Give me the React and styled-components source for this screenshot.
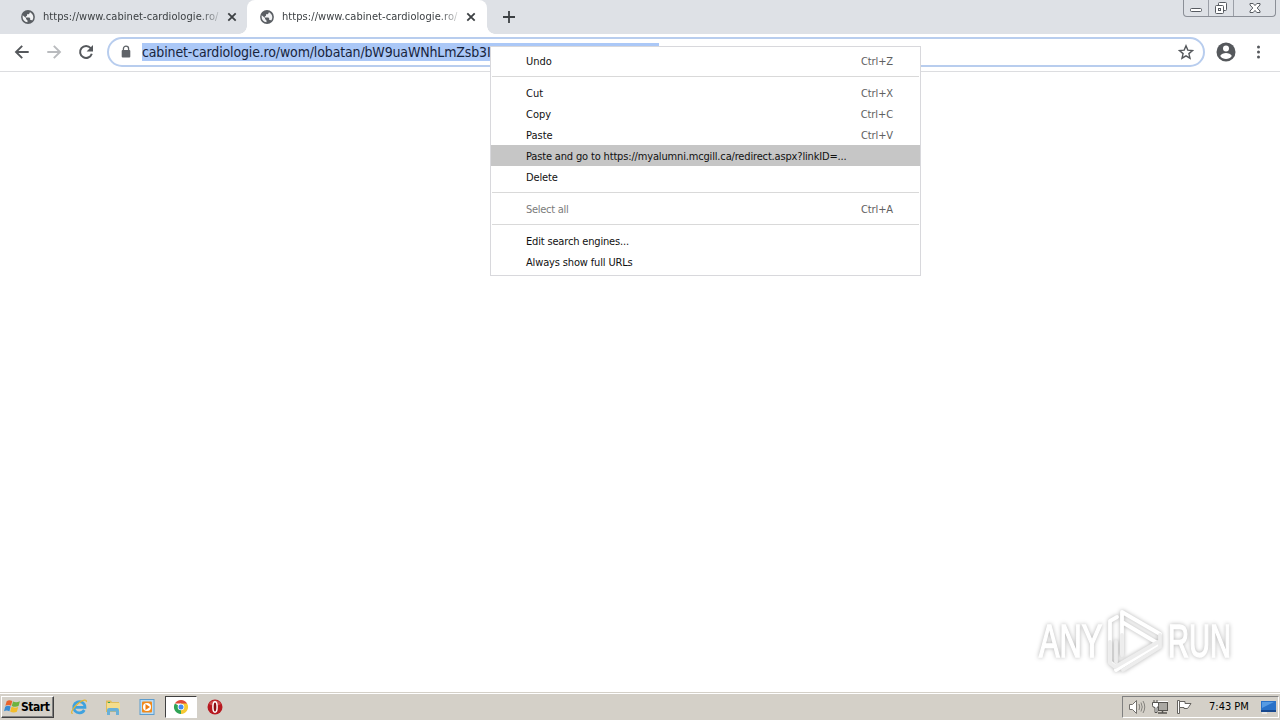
import React from "react";
import styled, { createGlobalStyle } from "styled-components";

const GlobalStyle = createGlobalStyle`
  * {
    box-sizing: border-box;
  }
  body {
    margin: 0;
    overflow: hidden;
    background: #fff;
    font-family: "DejaVu Sans Condensed", "DejaVu Sans", sans-serif;
    font-stretch: condensed;
    font-size: 11px;
    color: #000;
  }
  svg {
    display: block;
    flex: none;
  }
`;

const Screen = styled.div`
  display: flex;
  flex-direction: column;
  width: 1280px;
  height: 720px;
  position: relative;
`;

const TabStrip = styled.div`
  display: flex;
  height: 34px;
  background: #dee1e6;
`;

const Tab = styled.div`
  display: flex;
  align-items: center;
  width: ${(props) => (props.$active ? "240px" : "247px")};
  padding-left: ${(props) => (props.$active ? "12px" : "20px")};
  background: ${(props) => (props.$active ? "#fff" : "transparent")};
  border-radius: 8px 8px 0 0;
  position: relative;
  &:before,
  &:after {
    content: "";
    display: ${(props) => (props.$active ? "block" : "none")};
    position: absolute;
    bottom: 0;
    width: 8px;
    height: 8px;
  }
  &:before {
    left: -8px;
    background: radial-gradient(circle at 0 0, transparent 7.5px, #fff 8px);
  }
  &:after {
    right: -8px;
    background: radial-gradient(circle at 100% 0, transparent 7.5px, #fff 8px);
  }
`;

const TabTitle = styled.span`
  width: 177px;
  margin: 0 7px 0 7px;
  white-space: nowrap;
  line-height: 16px;
  letter-spacing: 0.07px;
  color: #3c4043;
  mask-image: linear-gradient(to right, #000 157px, transparent 181px);
`;

const NewTab = styled.div`
  display: flex;
  align-items: center;
  padding-left: 16px;
`;

const WindowButtons = styled.div`
  display: flex;
  height: 17px;
  margin: 0 4px 0 auto;
  border: 1px solid #8b8f97;
  border-top: 0;
  border-radius: 0 0 4px 4px;
`;

const WindowButton = styled.div`
  display: flex;
  align-items: center;
  justify-content: center;
  width: ${(props) => props.$width}px;
  & + & {
    border-left: 1px solid #9b9fa7;
  }
`;

const Toolbar = styled.div`
  display: flex;
  align-items: center;
  height: 38px;
  padding: 0 12px 1px 12px;
  border-bottom: 1px solid #dcdde0;
`;

const NavButton = styled.div`
  width: 20px;
  margin-right: 12px;
`;

const AddressBar = styled.div`
  display: flex;
  align-items: center;
  width: 1098px;
  height: 30px;
  margin-left: -1px;
  padding: 0 9px 0 10px;
  border: 2px solid #b8cdee;
  border-radius: 15px;
`;

const Url = styled.span`
  width: 517px;
  height: 18px;
  margin-left: 9px;
  margin-right: auto;
  overflow: hidden;
  white-space: nowrap;
  font-size: 14px;
  line-height: 18px;
  letter-spacing: -0.15px;
  background: #abc8f7;
  color: #17243c;
`;

const Profile = styled.div`
  margin: 0 12px 0 11px;
`;

const Page = styled.div`
  flex: 1;
  display: flex;
  align-items: flex-end;
  justify-content: flex-end;
  padding: 0 44px 17px 0;
`;

const Menu = styled.div`
  position: absolute;
  left: 490px;
  top: 46px;
  width: 431px;
  padding: 3px 0;
  border: 1px solid #d8d8dc;
  background: #fff;
`;

const MenuItem = styled.div`
  display: flex;
  justify-content: space-between;
  height: 21px;
  padding: 0 27px 0 35px;
  line-height: 23px;
  white-space: nowrap;
  letter-spacing: ${(props) => props.$spacing || 0}px;
  background: ${(props) => (props.$selected ? "#c6c6c6" : "transparent")};
  color: ${(props) => (props.$disabled ? "#7b7b7b" : "#111")};
`;

const Shortcut = styled.span`
  color: #606060;
  letter-spacing: -0.1px;
`;

const Separator = styled.div`
  height: 1px;
  margin: 5px 1px;
  background: #d9d9d9;
`;

const Taskbar = styled.div`
  display: flex;
  align-items: center;
  height: 28px;
  padding: 2px 1px 2px 1px;
  background: #d4d0c8;
  border-top: 1px solid #d4d0c8;
  box-shadow: inset 0 1px #fff;
`;

const StartButton = styled.div`
  display: flex;
  align-items: center;
  width: 53px;
  height: 22px;
  padding-left: 2px;
  border: 1px solid;
  border-color: #fff #404040 #404040 #fff;
  box-shadow: inset -1px -1px #808080;
  font-size: 12px;
  font-weight: 700;
  letter-spacing: -0.45px;
`;

const QuickButton = styled.div`
  display: flex;
  align-items: center;
  justify-content: center;
  width: 32px;
  height: 22px;
  margin-right: 2px;
  border: 1px solid;
  border-color: ${(props) =>
    props.$active ? "#404040 #fff #fff #404040" : "transparent"};
  background: ${(props) => (props.$active ? "#fff" : "transparent")};
`;

const QuickLaunch = styled.div`
  display: flex;
  margin-left: 9px;
`;

const Tray = styled.div`
  display: flex;
  align-items: center;
  width: 157px;
  height: 22px;
  margin-left: auto;
  padding-left: 5px;
  border: 1px solid;
  border-color: #808080 #fff #fff #808080;
`;

const TrayIcons = styled.div`
  display: flex;
  gap: 6px;
`;

const Clock = styled.span`
  width: 51px;
  margin-left: 15px;
  white-space: nowrap;
`;

const Globe = () => (
  <svg width="16" height="16" viewBox="0 0 16 16">
    <circle cx="8" cy="8" r="6.9" fill="#5a5e63" />
    <path
      d="M2.7 6.2 6 9.1v1l1.5 1.4v1.8C4.6 13 2.6 10.8 2.6 8zM9.8 3v1.1L8.6 5.3H7v1.5L5.8 7.6v1h3.6l.8.8v1.5h1.1l.9.7c2-2.5 1.5-6.4-2.4-8.6z"
      fill="#f1f2f4"
    />
  </svg>
);

const CloseTab = () => (
  <svg width="10" height="10" viewBox="0 0 10 10">
    <path d="m1.3 1.3 7.4 7.4m0-7.4L1.3 8.7" stroke="#3c4043" strokeWidth="1.8" />
  </svg>
);

const Arrow = ({ flip, color }) => (
  <svg width="20" height="20" viewBox="0 0 20 20">
    <path
      d="M16.7 10H4.2M10.2 3.8 4 10l6.2 6.2"
      transform={flip ? "rotate(180 10 10)" : undefined}
      fill="none"
      stroke={color}
      strokeWidth="1.9"
    />
  </svg>
);

const Reload = () => (
  <svg width="20" height="20" viewBox="0 0 20 20">
    <path
      d="M14.7 6.1A6 6 0 1 0 15.8 11.8"
      fill="none"
      stroke="#55585c"
      strokeWidth="2"
    />
    <path d="M17 3v6.4h-6.4z" fill="#55585c" />
  </svg>
);

const Lock = () => (
  <svg width="14" height="16" viewBox="0 0 14 16">
    <path d="M4.4 7V4.8a2.6 2.6 0 0 1 5.2 0V7" fill="none" stroke="#5f6368" strokeWidth="1.3" />
    <rect x="2.7" y="6" width="8.6" height="7.4" rx="1" fill="#5f6368" />
  </svg>
);

const Star = () => (
  <svg width="16" height="16" viewBox="0 0 16 16">
    <path
      d="m8 1.8 1.8 4.3 4.7.4-3.6 3.1 1.1 4.6L8 11.8l-4 2.4 1.1-4.6-3.6-3.1 4.7-.4z"
      fill="none"
      stroke="#55585c"
      strokeWidth="1.4"
    />
  </svg>
);

const Avatar = () => (
  <svg width="20" height="20" viewBox="0 0 20 20">
    <circle cx="10" cy="10" r="9.5" fill="#55585c" />
    <circle cx="10" cy="6.6" r="3" fill="#fff" />
    <path d="M4.2 13.9c.6-2 3.8-3 5.8-3s5.2 1 5.8 3a7 7 0 0 1-11.6 0z" fill="#fff" />
  </svg>
);

const WatermarkSvg = styled.svg`
  font: 400 47px "Liberation Sans", sans-serif;
  filter: drop-shadow(0 0 2px rgba(0, 0, 0, 0.3));
`;

const Watermark = () => (
  <WatermarkSvg width="200" height="70" viewBox="0 0 200 70">
    <defs>
      <linearGradient id="letters" x1="0" y1="17" x2="0" y2="53" gradientUnits="userSpaceOnUse">
        <stop offset="0.5" stopColor="#fff" />
        <stop offset="0.55" stopColor="#ececec" />
      </linearGradient>
    </defs>
    <g fill="url(#letters)" stroke="url(#letters)" strokeWidth="1.5">
      <text transform="translate(3 52) scale(0.655 1)">ANY</text>
      <text transform="translate(132 52) scale(0.62 1)">RUN</text>
    </g>
    <g fill="none" strokeWidth="3.8" strokeLinejoin="round" strokeLinecap="round">
      <path d="M86 48V7l38 22M86 17l37 22L80 65" stroke="#fff" />
      <path d="M81 12l-7 4v41l5 4" stroke="#fff" />
      <path d="M74 37v21l5 4 43-25M80 37v20M87 65l37-23V30M86 30v20" stroke="#ededed" />
    </g>
  </WatermarkSvg>
);

const Flag = () => (
  <svg width="17" height="17" viewBox="0 0 16 16">
    <path d="M2.500 3c2-1.500 3.500-1 5.300-.2L6.600 7.200c-2-1-3.600-.8-5.300.2z" fill="#e8642c" />
    <path d="M8.500 3.200c2 1 4 1 6.500-.2l-1.300 4.600c-2 1-4.300.9-6.400-.1z" fill="#6db33f" />
    <path d="M1.100 8.200c2-1.200 3.600-1 5.200-.2l-1.200 4.400c-2-1-3.600-.9-5.100.1z" fill="#398bd2" />
    <path d="M7.100 8.300c2 1 4.200 1 6.300.1l-1.300 4.500c-2 1-4.300.9-6.300-.1z" fill="#f3bd2b" />
  </svg>
);

const InternetExplorer = () => (
  <svg width="18" height="18" viewBox="0 0 18 18">
    <path
      d="M14.300 12A5.700 5.700 0 1 1 15 9.300H4.500"
      fill="none"
      stroke="#3fa2df"
      strokeWidth="2.700"
    />
    <path
      d="M2.700 15.500C-.5 15.500 4 8.500 9 4.700c4-3 8.200-3.800 7.200-.7"
      fill="none"
      stroke="#e4b632"
      strokeWidth="1.200"
    />
  </svg>
);

const Explorer = () => (
  <svg width="18" height="18" viewBox="0 0 18 18">
    <path d="M2 2.500h5l1 1.500h7v10H2z" fill="#dfbd5c" />
    <path d="M3 5h13v8H3z" fill="#f5dd8c" />
    <path d="M4 4h2v1H4z" fill="#38a853" />
    <path d="M3 17v-5q0-2 2-2h8q2 0 2 2v5h-3v-3.500H6V17z" fill="#69b0d8" />
  </svg>
);

const MediaPlayer = () => (
  <svg width="18" height="18" viewBox="0 0 18 18">
    <rect x="2" y="1.500" width="14" height="15" fill="#b9dcf5" stroke="#5d9dce" />
    <rect x="4" y="3.500" width="10" height="11" rx="1" fill="#f18a1b" />
    <circle cx="9" cy="9" r="4" fill="#fff" />
    <path d="m7.500 6 4.500 3-4.500 3z" fill="#ee7d10" />
  </svg>
);

const Chrome = () => (
  <svg width="16" height="16" viewBox="0 0 16 16">
    <path d="M8 8V1l6.100 3.500A7 7 0 0 1 8 15z" fill="#f6c932" />
    <path d="M8 8v7A7 7 0 0 1 1.900 4.500z" fill="#2fa355" />
    <path d="M1.900 4.500A7 7 0 0 1 14.100 4.500H8z" fill="#df4937" />
    <circle cx="8" cy="8" r="3.300" fill="#fff" />
    <circle cx="8" cy="8" r="2.500" fill="#438af0" />
  </svg>
);

const Opera = () => (
  <svg width="16" height="16" viewBox="0 0 16 16">
    <circle cx="8" cy="8" r="7.500" fill="#b71920" />
    <path d="M2 5a7 7 0 0 1 12 0c-3 2-9 2-12 0z" fill="#d04a4d" />
    <ellipse cx="8" cy="8" rx="2.100" ry="5.200" fill="#8c0c12" stroke="#fff" strokeWidth="1.500" />
  </svg>
);

const Speaker = () => (
  <svg width="18" height="16" viewBox="0 0 18 16">
    <path d="M1.500 5.500h3l4-4v13l-4-4h-3z" fill="#fff" stroke="#73716d" />
    <path
      d="M11 5q1.500 3 0 6M13 3.500q2.500 4.500 0 9M15 2q3.500 6 0 12"
      fill="none"
      stroke="#85837e"
    />
  </svg>
);

const Network = () => (
  <svg width="18" height="16" viewBox="0 0 18 16">
    <rect x="5.500" y="2.500" width="10" height="9" fill="#bbb9b4" stroke="#fff" />
    <rect x="6.500" y="3.500" width="9" height="8" fill="#aaa8a3" stroke="#55534f" />
    <path d="M6 14h9M10.500 12v2" stroke="#55534f" strokeWidth="1.500" />
    <path
      d="M.5 3.500h6v3q0 2-1.500 2v5H3v-5q-2.500 0-2.500-2zM2 1v2M5 1v2"
      fill="#fff"
      stroke="#55534f"
    />
  </svg>
);

const ActionFlag = () => (
  <svg width="18" height="16" viewBox="0 0 18 16">
    <path d="M1.500 1.500h2v13h-2z" fill="#fff" stroke="#65635f" />
    <path d="M3.500 2.500H9v2h6l-2 3-1.500 2H8v-1H3.500z" fill="#fff" stroke="#65635f" />
  </svg>
);

const Desktop = () => (
  <svg width="18" height="16" viewBox="0 0 18 16">
    <path d="M1 2h15v10H1z" fill="#2871c8" />
    <path d="M2 3h12L2 9z" fill="#569be3" />
    <path d="M1 11h15v2H1z" fill="#17488e" />
    <path d="M2 14h5" stroke="#fff" />
  </svg>
);

const menuItems = [
  { label: "Undo", shortcut: "Ctrl+Z" },
  null,
  { label: "Cut", shortcut: "Ctrl+X" },
  { label: "Copy", shortcut: "Ctrl+C" },
  { label: "Paste", shortcut: "Ctrl+V" },
  {
    label: "Paste and go to https://myalumni.mcgill.ca/redirect.aspx?linkID=...",
    selected: true,
    spacing: -0.16,
  },
  { label: "Delete", spacing: -0.15 },
  null,
  { label: "Select all", shortcut: "Ctrl+A", disabled: true, spacing: -0.28 },
  null,
  { label: "Edit search engines...", spacing: -0.17 },
  { label: "Always show full URLs", spacing: -0.15 },
];

export default function App() {
  return (
    <Screen>
      <GlobalStyle />
      <TabStrip>
        {[false, true].map((active) => (
          <Tab key={String(active)} $active={active}>
            <Globe />
            <TabTitle>https://www.cabinet-cardiologie.ro/</TabTitle>
            <CloseTab />
          </Tab>
        ))}
        <NewTab>
          <svg width="12" height="12" viewBox="0 0 12 12">
            <path d="M6 0v12M0 6h12" stroke="#3c4043" strokeWidth="1.8" />
          </svg>
        </NewTab>
        <WindowButtons>
          <WindowButton $width={24}>
            <svg width="14" height="14" viewBox="0 0 14 14">
              <rect x="1.5" y="7.500" width="11" height="3" rx="1" fill="#fff" stroke="#575b61" />
            </svg>
          </WindowButton>
          <WindowButton $width={25}>
            <svg width="14" height="14" viewBox="0 0 14 14">
              <rect x="4.500" y="1.500" width="8" height="8" rx="1" fill="#fff" stroke="#575b61" />
              <rect x="1.500" y="4.500" width="8" height="8" rx="1" fill="#fff" stroke="#575b61" />
              <rect x="4.500" y="7.500" width="2" height="2" fill="none" stroke="#575b61" />
            </svg>
          </WindowButton>
          <WindowButton $width={42}>
            <svg width="14" height="14" viewBox="0 0 14 14">
              <path
                d="M2 2.500h3.200L7 4.600l1.800-2.100H12v1.500L9.200 7l2.800 3v1.500H8.800L7 9.400l-1.800 2.100H2V10l2.800-3L2 4z"
                fill="#fff"
                stroke="#575b61"
              />
            </svg>
          </WindowButton>
        </WindowButtons>
      </TabStrip>

      <Toolbar>
        <NavButton>
          <Arrow color="#55585c" />
        </NavButton>
        <NavButton>
          <Arrow color="#b9bbbe" flip />
        </NavButton>
        <NavButton>
          <Reload />
        </NavButton>
        <AddressBar>
          <Lock />
          <Url>cabinet-cardiologie.ro/wom/lobatan/bW9uaWNhLmZsb3I</Url>
          <Star />
        </AddressBar>
        <Profile>
          <Avatar />
        </Profile>
        <svg width="20" height="20" viewBox="0 0 20 20" fill="#55585c">
          <circle cx="10.500" cy="5" r="1.500" />
          <circle cx="10.500" cy="10" r="1.500" />
          <circle cx="10.500" cy="15" r="1.500" />
        </svg>
      </Toolbar>

      <Page>
        <Watermark />
      </Page>

      <Taskbar>
        <StartButton>
          <Flag />
          Start
        </StartButton>
        <QuickLaunch>
          <QuickButton>
            <InternetExplorer />
          </QuickButton>
          <QuickButton>
            <Explorer />
          </QuickButton>
          <QuickButton>
            <MediaPlayer />
          </QuickButton>
          <QuickButton $active>
            <Chrome />
          </QuickButton>
          <QuickButton>
            <Opera />
          </QuickButton>
        </QuickLaunch>
        <Tray>
          <TrayIcons>
            <Speaker />
            <Network />
            <ActionFlag />
          </TrayIcons>
          <Clock>7:43 PM</Clock>
          <Desktop />
        </Tray>
      </Taskbar>

      <Menu>
        {menuItems.map((item, i) =>
          item ? (
            <MenuItem
              key={i}
              $selected={item.selected}
              $disabled={item.disabled}
              $spacing={item.spacing}
            >
              {item.label}
              {item.shortcut && <Shortcut>{item.shortcut}</Shortcut>}
            </MenuItem>
          ) : (
            <Separator key={i} />
          )
        )}
      </Menu>
    </Screen>
  );
}
